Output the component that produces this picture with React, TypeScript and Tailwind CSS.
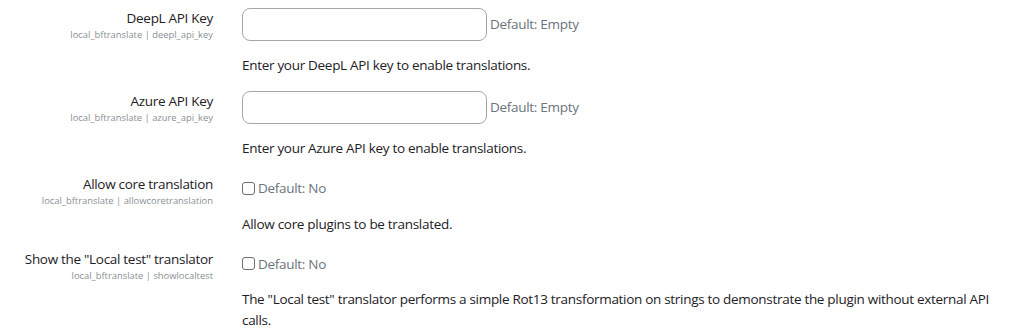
import React from "react";

const font = { fontFamily: '"Open Sans", "Noto Sans", sans-serif' };

function Label({ title, sub }: { title: string; sub: string }) {
  return (
    <div className="text-right">
      <div className="text-[13.5px] leading-[21px] tracking-[-0.3px] text-[#1d2125]">{title}</div>
      <div className="text-[9.4px] leading-[11px] text-[#8a9096]">{sub}</div>
    </div>
  );
}

function TextSetting({ title, sub, desc }: { title: string; sub: string; desc: string }) {
  return (
    <div className="grid grid-cols-[213px_770px] gap-x-[29px] mb-[14.5px]">
      <Label title={title} sub={sub} />
      <div>
        <div className="flex items-center">
          <div className="w-[245px] h-[33px] rounded-[8px] border border-[#a3a7ab] bg-white" />
          <span className="ml-[3px] text-[13.5px] leading-[21px] tracking-[-0.3px] text-[#6a737b]">Default: Empty</span>
        </div>
        <div className="mt-[14.5px] text-[13.5px] leading-[21px] tracking-[-0.3px] text-[#1d2125]">{desc}</div>
      </div>
    </div>
  );
}

function CheckSetting({ title, sub, desc }: { title: string; sub: string; desc: string }) {
  return (
    <div className="grid grid-cols-[213px_770px] gap-x-[29px] mb-[14.5px]">
      <Label title={title} sub={sub} />
      <div>
        <div className="pt-[3.5px] flex items-center h-[25.5px]">
          <span className="block w-[13px] h-[13px] rounded-[3px] border border-[#6e6e6e] bg-white" />
          <span className="ml-[3px] text-[13.5px] leading-[22px] tracking-[-0.3px] text-[#6a737b]">Default: No</span>
        </div>
        <div className="mt-[14.5px] text-[13.5px] leading-[21px] tracking-[-0.3px] text-[#1d2125]">{desc}</div>
      </div>
    </div>
  );
}

export default function App() {
  return (
    <div className="w-[1024px] h-[336px] overflow-hidden bg-white pt-[7.5px]" style={font}>
      <TextSetting
        title="DeepL API Key"
        sub="local_bftranslate | deepl_api_key"
        desc="Enter your DeepL API key to enable translations."
      />
      <TextSetting
        title="Azure API Key"
        sub="local_bftranslate | azure_api_key"
        desc="Enter your Azure API key to enable translations."
      />
      <CheckSetting
        title="Allow core translation"
        sub="local_bftranslate | allowcoretranslation"
        desc="Allow core plugins to be translated."
      />
      <CheckSetting
        title={'Show the "Local test" translator'}
        sub="local_bftranslate | showlocaltest"
        desc={'The "Local test" translator performs a simple Rot13 transformation on strings to demonstrate the plugin without external API calls.'}
      />
    </div>
  );
}
